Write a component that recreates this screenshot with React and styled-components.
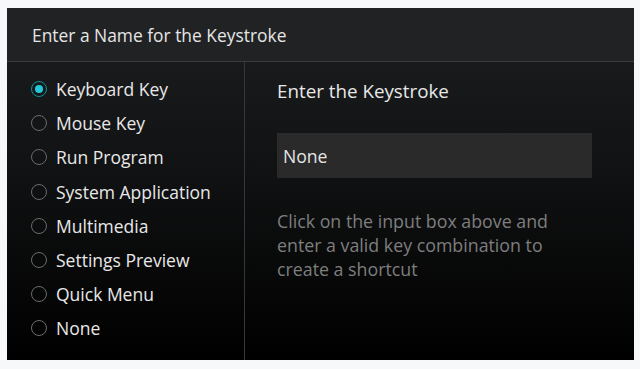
import React from "react";
import styled, { createGlobalStyle } from "styled-components";

const Global = createGlobalStyle`
  html, body { margin: 0; padding: 0; background: #f7f8fa; }
  body { font-family: "Open Sans", "Noto Sans", sans-serif; }
  * { box-sizing: border-box; }
`;

const Page = styled.div`
  width: 640px;
  height: 369px;
  padding: 8px 6px 9px 7px;
  background: #f7f8fa;
`;

const Dialog = styled.div`
  height: 352px;
  display: flex;
  flex-direction: column;
  background: linear-gradient(180deg, #1d1e20 0%, #111213 45%, #000000 100%);
`;

const Header = styled.div`
  height: 54px;
  flex: none;
  display: flex;
  align-items: center;
  padding: 0 0 0 25px;
  background: #212224;
  border-bottom: 1px solid #3a3b3d;
  color: #e6e6e6;
  font-size: 17.4px;
`;

const Body = styled.div`
  flex: 1;
  display: grid;
  grid-template-columns: 238px 1fr;
`;

const Options = styled.div`
  border-right: 1px solid #36373a;
  padding: 10px 0 0 24px;
  display: flex;
  flex-direction: column;
`;

const Option = styled.label`
  height: 34.2px;
  display: flex;
  align-items: center;
  gap: 9px;
  color: #e8e8e8;
  font-size: 17.5px;
`;

const Radio = styled.span`
  width: 16px;
  height: 16px;
  border-radius: 50%;
  flex: none;
  display: flex;
  align-items: center;
  justify-content: center;
  border: 1.7px solid ${(p) => (p.$on ? "#0e9098" : "#6a6b6c")};
  &::after {
    content: "";
    width: 8px;
    height: 8px;
    border-radius: 50%;
    background: ${(p) => (p.$on ? "#22c9d6" : "transparent")};
  }
`;

const Detail = styled.div`
  padding: 17px 42px 0 32px;
  display: flex;
  flex-direction: column;
`;

const Title = styled.div`
  color: #e8e8e8;
  font-size: 18.8px;
  height: 24px;
  line-height: 24px;
`;

const KeyInput = styled.div`
  margin-top: 30px;
  height: 45px;
  background: #2a2a2b;
  display: flex;
  align-items: center;
  padding: 0 6px;
  color: #e4e4e4;
  font-size: 17.6px;
`;

const Help = styled.p`
  margin: 31px 0 0;
  color: #7e7e7e;
  font-size: 17.8px;
  line-height: 24px;
  width: 300px;
`;

const options = [
  "Keyboard Key",
  "Mouse Key",
  "Run Program",
  "System Application",
  "Multimedia",
  "Settings Preview",
  "Quick Menu",
  "None",
];

export default function App() {
  return (
    <Page>
      <Global />
      <Dialog>
        <Header>Enter a Name for the Keystroke</Header>
        <Body>
          <Options>
            {options.map((o, i) => (
              <Option key={o}>
                <Radio $on={i === 0} />
                {o}
              </Option>
            ))}
          </Options>
          <Detail>
            <Title>Enter the Keystroke</Title>
            <KeyInput>None</KeyInput>
            <Help>
              Click on the input box above and enter a valid key combination to
              create a shortcut
            </Help>
          </Detail>
        </Body>
      </Dialog>
    </Page>
  );
}
